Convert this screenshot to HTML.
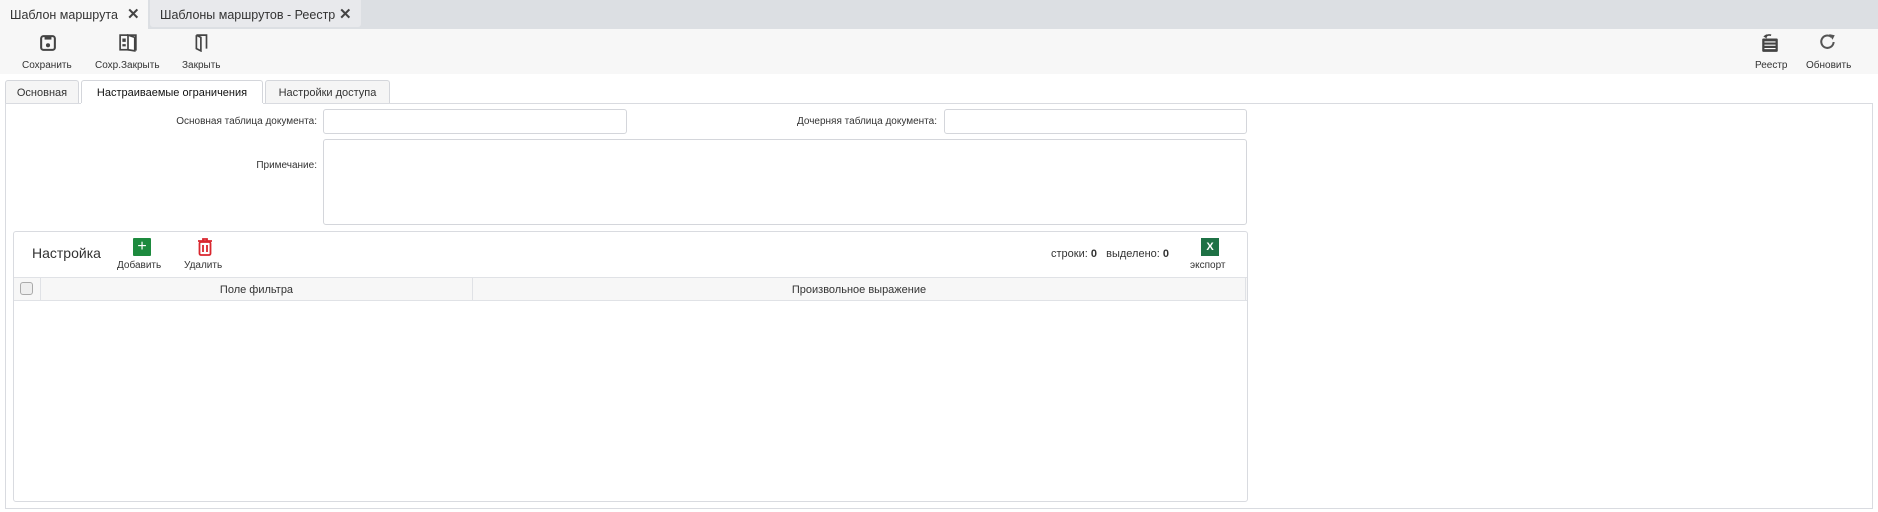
<!DOCTYPE html>
<html><head><meta charset="utf-8"><style>
*{box-sizing:border-box;margin:0;padding:0}
body{width:1878px;height:512px;background:#fff;font-family:"Liberation Sans",sans-serif;color:#333;position:relative;overflow:hidden;font-size:11px}
.abs{position:absolute}
.tabbar{left:0;top:0;width:1878px;height:29px;background:#dcdfe3}
.t1{left:0;top:0;width:148px;height:29px;background:#f7f7f7;font-size:12.5px;padding:8px 0 0 10px;color:#333}
.t2{left:150px;top:0;width:211px;height:27px;background:#e8e9ec;font-size:12.5px;padding:8px 0 0 10px;border-radius:0 0 3px 3px}
.x{position:absolute;font-size:15px;font-weight:bold;top:5px;color:#444}
.toolbar{left:0;top:29px;width:1878px;height:45px;background:#f7f7f7}
.btn{position:absolute;top:60px;font-size:10px;color:#333;text-align:center}
.ptab{position:absolute;top:80px;height:24px;border:1px solid #d4d6db;border-bottom:none;background:#f5f5f5;font-size:11px;padding:6px 0 0 0;text-align:center;border-radius:3px 3px 0 0}
.panel{left:5px;top:103px;width:1868px;height:406px;border:1px solid #d9dbe0}
.lbl{position:absolute;font-size:10px;text-align:right}
.inp{position:absolute;border:1px solid #d4d6db;border-radius:3px;background:#fff}
.grid{left:13px;top:231px;width:1235px;height:271px;border:1px solid #d9dbe0;border-radius:3px}
.hdr{left:14px;top:277px;width:1233px;height:24px;background:#f7f7f7;border-top:1px solid #e0e2e6;border-bottom:1px solid #e0e2e6;font-size:11px}
</style></head><body>
<div class="abs tabbar"></div>
<div class="abs t1">Шаблон маршрута<span class="x" style="left:127px">✕</span></div>
<div class="abs t2">Шаблоны маршрутов - Реестр<span class="x" style="left:189px">✕</span></div>
<div class="abs toolbar"></div>
<svg class="abs" style="left:40px;top:35px" width="16" height="16" viewBox="0 0 14 14"><rect x="1" y="1" width="12" height="12" rx="2" fill="none" stroke="#444" stroke-width="1.8"/><rect x="4" y="1" width="6" height="3" fill="#444"/><circle cx="7" cy="9" r="1.8" fill="#444"/></svg>
<svg class="abs" style="left:119px;top:34px" width="18" height="18" viewBox="0 0 16 16"><rect x="1" y="1" width="14" height="13" fill="none" stroke="#444" stroke-width="1.5"/><path d="M8 1 L14 3 L14 15 L8 14Z" fill="#fff" stroke="#444" stroke-width="1.5"/><rect x="3" y="4" width="3" height="3" fill="#444"/><rect x="3" y="9" width="3" height="2" fill="#444"/></svg>
<svg class="abs" style="left:195px;top:34px" width="14" height="18" viewBox="0 0 12 16"><path d="M1 1 H10 V13 M1 1 V13 L5 15 V3 L1 1" fill="none" stroke="#444" stroke-width="1.5"/></svg>
<div class="btn" style="left:22px">Сохранить</div>
<div class="btn" style="left:95px">Сохр.Закрыть</div>
<div class="btn" style="left:182px">Закрыть</div>
<svg class="abs" style="left:1761px;top:33px" width="18" height="20" viewBox="0 0 16 18"><path d="M4 4 Q5 1 9 2" fill="none" stroke="#444" stroke-width="1.5"/><path d="M2 3 L5 1 L5 5Z" fill="#444"/><rect x="1" y="5" width="14" height="12" rx="1" fill="#444"/><path d="M3 8H13M3 11H13M3 14H13" stroke="#fff" stroke-width="1"/></svg>
<svg class="abs" style="left:1819px;top:33px" width="18" height="18" viewBox="0 0 16 16"><path d="M13 8 A5.5 5.5 0 1 1 11 3.5" fill="none" stroke="#555" stroke-width="1.8"/><path d="M9 1 L14 2 L12 6Z" fill="#555"/></svg>
<div class="btn" style="left:1755px">Реестр</div>
<div class="btn" style="left:1806px">Обновить</div>
<div class="ptab" style="left:5px;width:74px">Основная</div>
<div class="ptab" style="left:81px;width:182px;background:#fff;height:25px;color:#111">Настраиваемые ограничения</div>
<div class="ptab" style="left:265px;width:125px">Настройки доступа</div>
<div class="abs panel"></div>
<div class="abs" style="left:81px;top:103px;width:182px;height:2px;background:#fff"></div>
<div class="lbl" style="left:100px;top:116px;width:217px">Основная таблица документа:</div>
<div class="inp" style="left:323px;top:109px;width:304px;height:25px"></div>
<div class="lbl" style="left:700px;top:116px;width:237px">Дочерняя таблица документа:</div>
<div class="inp" style="left:944px;top:109px;width:303px;height:25px"></div>
<div class="lbl" style="left:200px;top:160px;width:117px">Примечание:</div>
<div class="inp" style="left:323px;top:139px;width:924px;height:86px"></div>
<div class="abs grid"></div>
<div class="abs" style="left:32px;top:245px;font-size:14px;color:#333">Настройка</div>
<div class="abs" style="left:133px;top:238px;width:18px;height:18px;background:#1d8a3e;color:#fff;font-size:16px;line-height:17px;text-align:center;border-radius:1px">+</div>
<div class="abs" style="left:117px;top:260px;font-size:10px">Добавить</div>
<svg class="abs" style="left:197px;top:238px" width="16" height="18" viewBox="0 0 16 18"><path d="M1 3H15M6 3V1H10V3" stroke="#d9262e" stroke-width="1.8" fill="none"/><rect x="2.5" y="4" width="11" height="13" rx="1.5" fill="none" stroke="#d9262e" stroke-width="1.8"/><path d="M6 7V14M10 7V14" stroke="#d9262e" stroke-width="1.8"/></svg>
<div class="abs" style="left:184px;top:260px;font-size:10px">Удалить</div>
<div class="abs" style="left:1051px;top:248px;font-size:11px">строки: <b>0</b> &nbsp; выделено: <b>0</b></div>
<div class="abs" style="left:1201px;top:238px;width:18px;height:18px;background:#1e7145;color:#fff;font-size:11px;font-weight:bold;line-height:18px;text-align:center">X</div>
<div class="abs" style="left:1190px;top:260px;font-size:10px">экспорт</div>
<div class="abs hdr"></div>
<div class="abs" style="left:20px;top:282px;width:13px;height:13px;border:1px solid #aaa;border-radius:3px;background:#eee"></div>
<div class="abs" style="left:40px;top:278px;width:1px;height:23px;background:#e0e2e6"></div>
<div class="abs" style="left:472px;top:278px;width:1px;height:23px;background:#e0e2e6"></div>
<div class="abs" style="left:1245px;top:278px;width:1px;height:23px;background:#e0e2e6"></div>
<div class="abs" style="left:41px;top:284px;width:431px;text-align:center;font-size:11px">Поле фильтра</div>
<div class="abs" style="left:473px;top:284px;width:772px;text-align:center;font-size:11px">Произвольное выражение</div>
</body></html>
